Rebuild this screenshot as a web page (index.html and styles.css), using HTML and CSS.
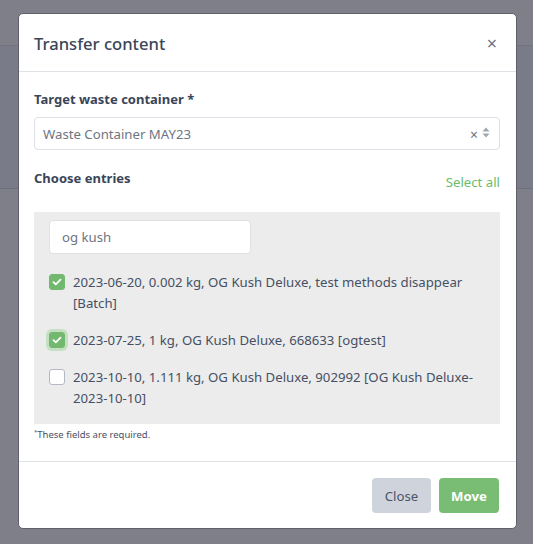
FILE: index.html
```html
<!DOCTYPE html>
<html>
<head>
<meta charset="utf-8">
<link rel="stylesheet" href="styles.css">
</head>
<body>
<div class="page">
  <div class="page-header"></div>
  <div class="page-band"></div>
</div>
<div class="modal">
  <div class="modal-header">
    <h2 class="modal-title">Transfer content</h2>
    <span class="close-x">&times;</span>
  </div>
  <div class="modal-body">
    <label class="field-label">Target waste container *</label>
    <div class="select">
      <span class="select-value">Waste Container MAY23</span>
      <span class="select-icons">
        <span class="clear">&times;</span>
        <svg class="updown" width="8" height="11" viewBox="0 0 8 11"><path d="M4 0.5 L7.5 4.5 H0.5 Z M4 10.5 L7.5 6.5 H0.5 Z" fill="#a0a5b0"/></svg>
      </span>
    </div>
    <div class="entries-head">
      <span class="field-label">Choose entries</span>
      <span class="select-all">Select all</span>
    </div>
    <div class="entries-box">
      <div class="search">og kush</div>
      <div class="entry">
        <span class="cb checked"><svg width="10" height="8" viewBox="0 0 10 8"><path d="M1.5 4.2 L3.8 6.3 L8.5 1.7" stroke="#fff" stroke-width="1.8" fill="none" stroke-linecap="round" stroke-linejoin="round"/></svg></span>
        <span class="entry-text">2023-06-20, 0.002 kg, OG Kush Deluxe, test methods disappear [Batch]</span>
      </div>
      <div class="entry">
        <span class="cb checked focus"><svg width="10" height="8" viewBox="0 0 10 8"><path d="M1.5 4.2 L3.8 6.3 L8.5 1.7" stroke="#fff" stroke-width="1.8" fill="none" stroke-linecap="round" stroke-linejoin="round"/></svg></span>
        <span class="entry-text">2023-07-25, 1 kg, OG Kush Deluxe, 668633 [ogtest]</span>
      </div>
      <div class="entry">
        <span class="cb"></span>
        <span class="entry-text">2023-10-10, 1.111 kg, OG Kush Deluxe, 902992 [OG Kush Deluxe-2023-10-10]</span>
      </div>
    </div>
    <p class="required"><sup>*</sup>These fields are required.</p>
  </div>
  <div class="modal-footer">
    <button class="btn btn-close">Close</button>
    <button class="btn btn-move">Move</button>
  </div>
</div>
</body>
</html>
```

FILE: styles.css
```css
* { box-sizing: border-box; }
html, body { margin: 0; padding: 0; }
body {
  width: 533px;
  height: 544px;
  background: #7f7f89;
  font-family: "Segoe UI", "Noto Sans", "Open Sans", sans-serif;
  color: #465064;
  position: relative;
  overflow: hidden;
}
.page-header {
  height: 46px;
  border-bottom: 1px solid #72737f;
}
.page-band {
  height: 143px;
  background: #7a7b88;
  border-bottom: 1px solid #6e6f7d;
}
.modal {
  position: absolute;
  left: 18px;
  top: 13px;
  width: 499px;
  height: 516px;
  background: #fff;
  border: 1px solid #5f606c;
  border-radius: 5px;
  display: flex;
  flex-direction: column;
}
.modal-header {
  height: 58px;
  padding: 0 15px;
  display: flex;
  align-items: center;
  justify-content: space-between;
  border-bottom: 1px solid #dee1e6;
}
.modal-title {
  margin: 0;
  font-size: 16.6px;
  font-weight: 500;
  color: #3a4558;
  padding-top: 1px;
}
.close-x {
  font-size: 18px;
  color: #6b7280;
  line-height: 1;
  margin-right: 4px;
}
.modal-body {
  padding: 18px 16px 0 15px;
  flex: 1;
}
.field-label {
  display: block;
  font-size: 13px;
  font-weight: 700;
  color: #3a4558;
  line-height: 18px;
}
.select {
  margin-top: 9px;
  height: 33px;
  border: 1px solid #dcdfe5;
  border-radius: 4px;
  display: flex;
  align-items: center;
  justify-content: space-between;
  padding: 0 9px 0 8px;
}
.select-value {
  font-size: 13.2px;
  color: #6e7582;
}
.select-icons {
  display: flex;
  align-items: center;
  gap: 4px;
}
.clear {
  font-size: 14px;
  color: #6e7582;
  line-height: 1;
  margin-top: 2px;
}
.updown { display: block; margin-top: -2px; }
.entries-head {
  margin-top: 19px;
  display: flex;
  justify-content: space-between;
  align-items: flex-start;
}
.select-all {
  font-size: 13.2px;
  color: #6cbd69;
  margin-top: 4px;
}
.entries-box {
  margin-top: 21px;
  background: #ececec;
  padding: 8px 15px 15px 15px;
  width: 466px;
}
.search {
  width: 202px;
  height: 34px;
  background: #fff;
  border: 1px solid #dfe1e5;
  border-radius: 4px;
  font-size: 13.2px;
  color: #6e7582;
  padding: 0 12px;
  line-height: 32px;
  margin-bottom: 18px;
}
.entry {
  display: flex;
  align-items: flex-start;
  gap: 8px;
  font-size: 13.2px;
  line-height: 21px;
  color: #465064;
  margin-bottom: 16px;
}
.entry:last-child { margin-bottom: 0; }
.cb {
  flex: none;
  width: 16px;
  height: 16px;
  margin-top: 2px;
  border: 1px solid #b4b8c1;
  border-radius: 3px;
  background: #fff;
  display: flex;
  align-items: center;
  justify-content: center;
}
.cb.checked {
  background: #72b96f;
  border-color: #72b96f;
}
.cb.focus {
  box-shadow: 0 0 0 3px #c4dfc2;
}
.entry-text { flex: 1; }
.required {
  margin: 4px 0 0 0;
  font-size: 9.5px;
  color: #465064;
}
.required sup { font-size: 6px; }
.modal-footer {
  height: 67px;
  border-top: 1px solid #dee1e6;
  display: flex;
  justify-content: flex-end;
  align-items: flex-start;
  padding: 16px 17px 0 0;
  gap: 8px;
}
.btn {
  height: 35px;
  border: none;
  border-radius: 4px;
  font-family: inherit;
  font-size: 13.2px;
  padding: 0;
}
.btn-close {
  width: 59px;
  background: #cfd3dc;
  color: #4b5567;
}
.btn-move {
  width: 60px;
  background: #79bd74;
  color: #fff;
  font-weight: 700;
}
```
